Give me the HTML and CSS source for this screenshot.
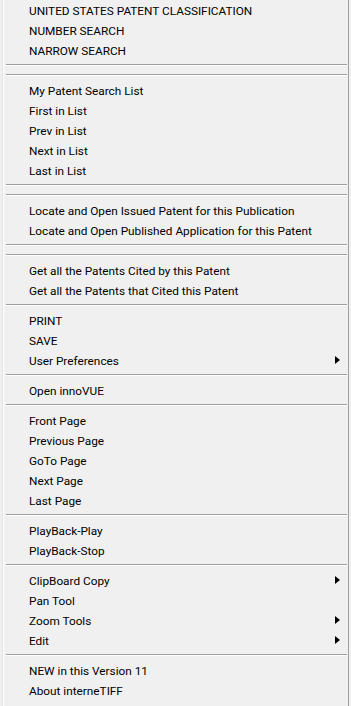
FILE: index.html
```html
<!DOCTYPE html>
<html lang="en">
<head>
    <meta charset="UTF-8">
    <title>Menu</title>
    <link rel="stylesheet" href="styles.css">
</head>
<body>
    <ul class="menu">
        <li class="item">UNITED STATES PATENT CLASSIFICATION</li>
        <li class="item">NUMBER SEARCH</li>
        <li class="item">NARROW SEARCH</li>
        <li class="sep"></li>
        <li class="sep"></li>
        <li class="item">My Patent Search List</li>
        <li class="item">First in List</li>
        <li class="item">Prev in List</li>
        <li class="item">Next in List</li>
        <li class="item">Last in List</li>
        <li class="sep"></li>
        <li class="sep"></li>
        <li class="item">Locate and Open Issued Patent for this Publication</li>
        <li class="item">Locate and Open Published Application for this Patent</li>
        <li class="sep"></li>
        <li class="sep"></li>
        <li class="item">Get all the Patents Cited by this Patent</li>
        <li class="item">Get all the Patents that Cited this Patent</li>
        <li class="sep"></li>
        <li class="item">PRINT</li>
        <li class="item">SAVE</li>
        <li class="item sub">User Preferences</li>
        <li class="sep"></li>
        <li class="item">Open innoVUE</li>
        <li class="sep"></li>
        <li class="item">Front Page</li>
        <li class="item">Previous Page</li>
        <li class="item">GoTo Page</li>
        <li class="item">Next Page</li>
        <li class="item">Last Page</li>
        <li class="sep"></li>
        <li class="item">PlayBack-Play</li>
        <li class="item">PlayBack-Stop</li>
        <li class="sep"></li>
        <li class="item sub">ClipBoard Copy</li>
        <li class="item">Pan Tool</li>
        <li class="item sub">Zoom Tools</li>
        <li class="item sub">Edit</li>
        <li class="sep"></li>
        <li class="item">NEW in this Version 11</li>
        <li class="item">About interneTIFF</li>
    </ul>
</body>
</html>
```
FILE: styles.css
```css
body{
    margin: 0;
    background-color: #f0f0f0;
    font-family: Roboto, "Open Sans", sans-serif;
    font-size: 11.8px;
    color: #000;
}
.menu{
    list-style: none;
    margin: 0;
    padding: 0;
    width: 347px;
    height: 706px;
    box-sizing: border-box;
    margin-left: 2px;
    border-left: 1px solid #e3e3e3;
    border-right: 1px solid #a0a0a0;
    background-color: #f0f0f0;
    box-shadow: inset 1px 0 0 #fff;
}
.item{
    position: relative;
    height: 20px;
    line-height: 20px;
    padding-left: 26px;
    padding-top: 1px;
    box-sizing: border-box;
    white-space: nowrap;
}
.sub::after{
    content: "";
    position: absolute;
    right: 8px;
    top: 6px;
    border-left: 5px solid #000;
    border-top: 4px solid transparent;
    border-bottom: 4px solid transparent;
}
.sep{
    height: 10px;
    display: flex;
    align-items: center;
    padding: 0 1px 0 3px;
}
.sep::before{
    content: "";
    flex: 1;
    height: 1px;
    border-bottom: 1px solid #fff;
    background-color: #a0a0a0;
}
```
